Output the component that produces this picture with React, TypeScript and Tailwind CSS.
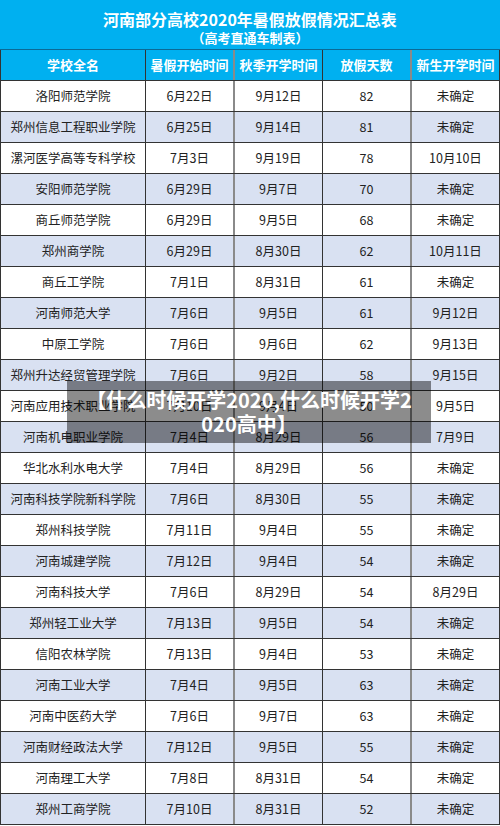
import React from "react";

type Row = [string, string, string, string, string];

const rows: Row[] = [
  ["洛阳师范学院", "6月22日", "9月12日", "82", "未确定"],
  ["郑州信息工程职业学院", "6月25日", "9月14日", "81", "未确定"],
  ["漯河医学高等专科学校", "7月3日", "9月19日", "78", "10月10日"],
  ["安阳师范学院", "6月29日", "9月7日", "70", "未确定"],
  ["商丘师范学院", "6月29日", "9月5日", "68", "未确定"],
  ["郑州商学院", "6月29日", "8月30日", "62", "10月11日"],
  ["商丘工学院", "7月1日", "8月31日", "61", "未确定"],
  ["河南师范大学", "7月6日", "9月5日", "61", "9月12日"],
  ["中原工学院", "7月6日", "9月6日", "62", "9月13日"],
  ["郑州升达经贸管理学院", "7月6日", "9月2日", "58", "9月15日"],
  ["河南应用技术职业学院", "7月10日", "9月4日", "50", "9月5日"],
  ["河南机电职业学院", "7月4日", "8月29日", "56", "7月9日"],
  ["华北水利水电大学", "7月4日", "8月29日", "56", "未确定"],
  ["河南科技学院新科学院", "7月6日", "8月30日", "55", "未确定"],
  ["郑州科技学院", "7月11日", "9月4日", "55", "未确定"],
  ["河南城建学院", "7月12日", "9月4日", "54", "未确定"],
  ["河南科技大学", "7月6日", "8月29日", "54", "8月29日"],
  ["郑州轻工业大学", "7月13日", "9月5日", "54", "未确定"],
  ["信阳农林学院", "7月13日", "9月4日", "53", "未确定"],
  ["河南工业大学", "7月4日", "9月5日", "63", "未确定"],
  ["河南中医药大学", "7月6日", "9月7日", "63", "未确定"],
  ["河南财经政法大学", "7月12日", "9月5日", "55", "未确定"],
  ["河南理工大学", "7月8日", "8月31日", "54", "未确定"],
  ["郑州工商学院", "7月10日", "8月31日", "52", "未确定"],
];

const headers = ["学校全名", "暑假开始时间", "秋季开学时间", "放假天数", "新生开学时间"];

const gridCols = "grid grid-cols-[145px_89px_88px_89px_88px]";
const cellBorders = [
  "border-r border-[#333]",
  "border-r-2 border-[#8a8a8a]",
  "border-r border-[#333]",
  "border-r-2 border-[#8a8a8a]",
  "border-r border-[#333]",
];

export default function App() {
  return (
    <div
      className="relative w-[500px] h-[826px] overflow-hidden bg-white"
      style={{ fontFamily: '"Noto Sans CJK SC", "Noto Sans", sans-serif' }}
    >
      <div className="flex h-[50px] flex-col items-center border-b border-[#0b6a96] bg-[#00b0f0] pt-[7px] font-bold text-white">
        <div className="text-[16px] leading-[24px]">河南部分高校2020年暑假放假情况汇总表</div>
        <div className="text-[13px] leading-[14px]">（高考直通车制表）</div>
      </div>

      <div className={`${gridCols} h-[31px] border-b border-l border-[#333] bg-[#00b0f0]`}>
        {headers.map((h, i) => (
          <div
            key={h}
            className={`flex items-center justify-center text-[13px] font-bold text-white ${cellBorders[i]}`}
          >
            {h}
          </div>
        ))}
      </div>

      {rows.map((r, idx) => (
        <div
          key={r[0]}
          className={`${gridCols} h-[31px] border-b border-l border-[#333] ${
            idx % 2 === 1 ? "bg-[#d9e1f2]" : "bg-white"
          }`}
        >
          {r.map((c, i) => (
            <div
              key={i}
              className={`flex items-center justify-center whitespace-nowrap text-[12.5px] text-[#222] ${cellBorders[i]}`}
            >
              {c}
            </div>
          ))}
        </div>
      ))}

      {/* title overlay on top of the table */}
      <div className="absolute left-[67px] top-[381px] flex h-[62px] w-[364px] items-center justify-center bg-black/45">
        <p className="whitespace-nowrap text-center text-[20px] font-bold leading-[24px] text-white">
          【什么时候开学2020,什么时候开学2
          <br />
          020高中】
        </p>
      </div>
    </div>
  );
}
